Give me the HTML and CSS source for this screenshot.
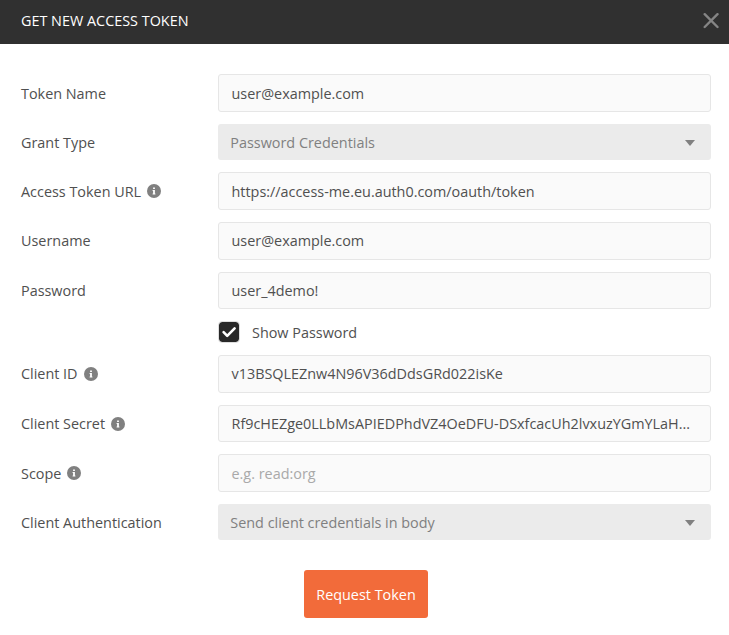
FILE: index.html
```html
<!DOCTYPE html>
<html lang="en">
<head>
<meta charset="utf-8">
<title>Get New Access Token</title>
<link rel="stylesheet" href="styles.css">
</head>
<body>
<svg class="defs" width="0" height="0" aria-hidden="true">
<symbol id="info" viewBox="0 0 14 14"><circle cx="7" cy="7" r="7" fill="#808080"/><path d="M5.6 6h2.3v3.6h.5v1H5.6v-1h.5V7h-.5zM6.1 3.4h1.8v1.7H6.1z" fill="#fff"/></symbol>
<symbol id="caret" viewBox="0 0 10 6"><path d="M0 0h10L5 6z" fill="#808080"/></symbol>
</svg>
<header class="header"><h1 class="title">GET NEW ACCESS TOKEN</h1>
<svg class="close" viewBox="0 0 16 16"><path d="M1.7 1.2l12.8 12.8M14.5 1.2L1.7 14" stroke="#858585" stroke-width="2.4" stroke-linecap="round"/></svg></header>
<main class="form">
<div class="row row-low"><span class="label">Token Name</span><div class="field">user@example.com</div></div>
<div class="row row-select row-low"><span class="label">Grant Type</span><div class="select">Password Credentials<svg class="caret"><use href="#caret"/></svg></div></div>
<div class="row row-low"><span class="label">Access Token URL<svg class="info"><use href="#info"/></svg></span><div class="field">https://access-me.eu.auth0.com/oauth/token</div></div>
<div class="row"><span class="label">Username</span><div class="field">user@example.com</div></div>
<div class="row row-short"><span class="label">Password</span><div class="field">user_4demo!</div></div>
<div class="check-row"><span class="checkbox"><svg class="tick" viewBox="0 0 16 16"><path d="M2.6 8.2l3.6 3.6 7.4-7.4" fill="none" stroke="#fff" stroke-width="2.6" stroke-linecap="round" stroke-linejoin="round"/></svg></span><span class="check-label">Show Password</span></div>
<div class="row"><span class="label">Client ID<svg class="info"><use href="#info"/></svg></span><div class="field">v13BSQLEZnw4N96V36dDdsGRd022isKe</div></div>
<div class="row row-short"><span class="label">Client Secret<svg class="info"><use href="#info"/></svg></span><div class="field">Rf9cHEZge0LLbMsAPIEDPhdVZ4OeDFU-DSxfcacUh2lvxuzYGmYLaH...</div></div>
<div class="row row-low"><span class="label">Scope<svg class="info"><use href="#info"/></svg></span><div class="field placeholder">e.g. read:org</div></div>
<div class="row row-select row-low"><span class="label">Client Authentication</span><div class="select">Send client credentials in body<svg class="caret"><use href="#caret"/></svg></div></div>
<button class="submit">Request Token</button>
</main>
</body>
</html>
```

FILE: styles.css
```css
* { box-sizing: border-box; }
body { margin: 0; background: #fff; color: #505050; font: 14.4px/20px "Open Sans", sans-serif; }
.defs { display: block; }
.header { height: 44px; background: #303030; display: flex; justify-content: space-between; align-items: center; padding: 0 10px 2px 21px; }
.title { margin: 0; color: #fff; font-size: 14.4px; font-weight: 400; }
.close { width: 16px; height: 16px; }
.form { display: flex; flex-direction: column; padding: 30px 18px 0 21px; }
.row { display: grid; grid-template-columns: 197px 1fr; align-items: center; height: 38px; margin-bottom: 12px; }
.row-select { height: 36px; }
.row-short { height: 37px; }
.label { display: flex; align-items: center; }
.info { width: 14px; height: 14px; margin-left: 6px; }
.field { height: 100%; display: flex; align-items: center; border: 1px solid #e6e6e6; border-radius: 3px; background: #fafafa; padding: 0 12.5px; white-space: nowrap; }
.placeholder { color: #a9a9a9; }
.select { height: 100%; display: flex; align-items: center; justify-content: space-between; border-radius: 3px; background: #ebebeb; color: #808080; padding: 0 16.5px 0 12.3px; }
.row-low .label, .row-low .field, .row-low .select { padding-top: 2px; }
.row-low .info { margin-bottom: 2px; }
.caret { width: 10px; height: 6px; }
.check-row { display: flex; align-items: center; height: 22px; margin: 0 0 12px 197px; }
.checkbox { width: 22px; height: 22px; border: 1px solid #dedede; border-radius: 4px; background: #282828; background-clip: padding-box; display: flex; align-items: center; justify-content: center; }
.tick { width: 16px; height: 16px; }
.check-label { margin-left: 12px; padding-top: 2px; }
.submit { width: 124px; height: 48px; margin: 18px 0 0 283px; padding: 2px 0 0; border: 0; border-radius: 3px; background: #f26b3a; color: #fff; font: inherit; }
```
